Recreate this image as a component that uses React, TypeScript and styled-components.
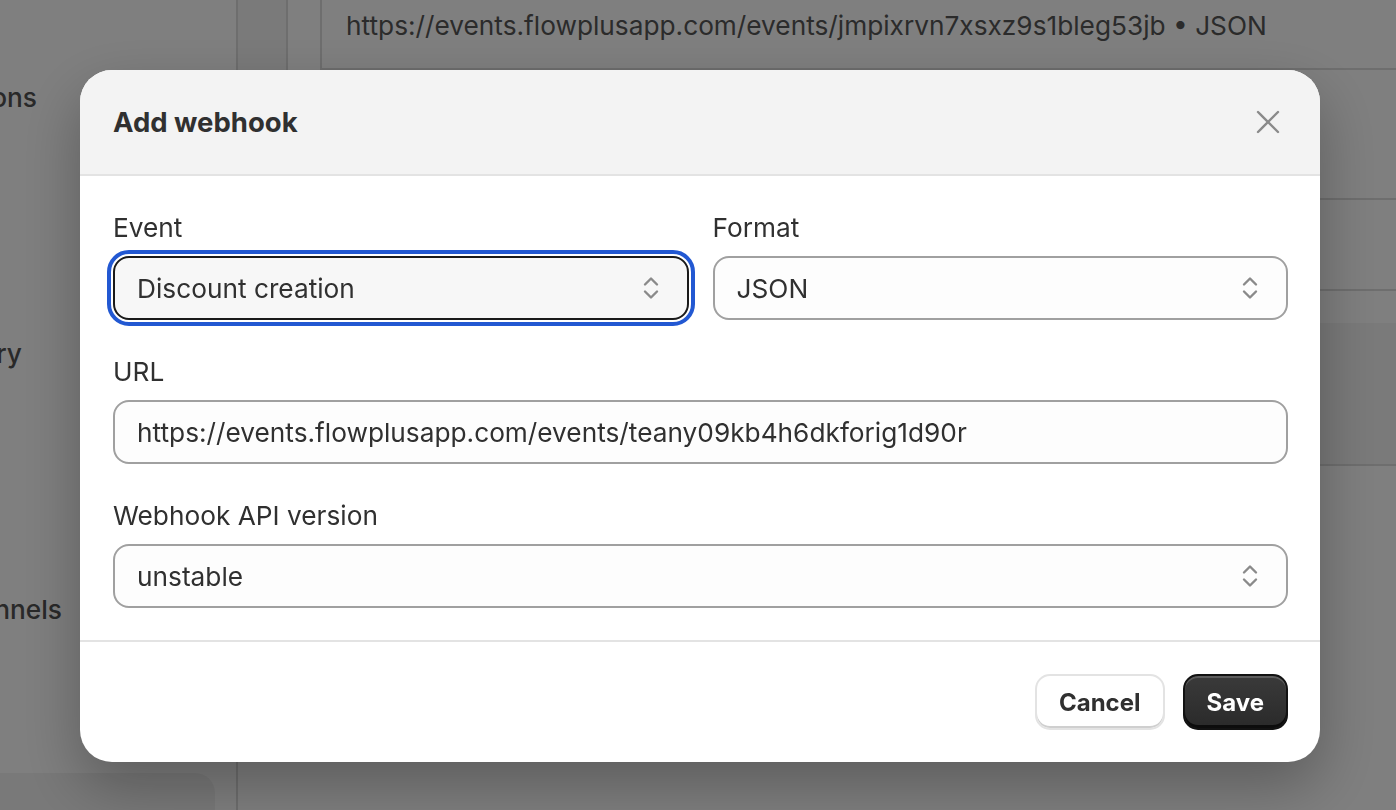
import styled, { createGlobalStyle } from "styled-components";

const GlobalStyle = createGlobalStyle`
  html, body {
    margin: 0;
    padding: 0;
    background: #ffffff;
    font-family: Inter, "Noto Sans", "Liberation Sans", sans-serif;
    -webkit-font-smoothing: antialiased;
  }
  * { box-sizing: border-box; }
`;

const Page = styled.div`
  display: flex;
  width: 1396px;
  height: 810px;
  overflow: hidden;
  background: #ffffff;
  color: #575757;
  font-size: 26.25px;
`;

const Sidebar = styled.nav`
  width: 238px;
  flex-shrink: 0;
  display: flex;
  flex-direction: column;
  overflow: hidden;
  border-right: 2px solid #dcdcdc;
`;

// the settings nav is scrolled sideways, only the ends of long labels show
const NavList = styled.div`
  display: flex;
  flex-direction: column;
  padding-top: 2px;
  margin-left: -250px;
`;

const NavItem = styled.div`
  height: 64px;
  line-height: 64px;
  flex-shrink: 0;
  white-space: nowrap;
  font-weight: 550;
  color: #525252;
`;

const SidebarCard = styled.div`
  margin-top: auto;
  flex-shrink: 0;
  width: 215px;
  height: 37px;
  background: #f2f2f2;
  border-top-right-radius: 20px;
`;

const Main = styled.div`
  flex: 1;
  display: flex;
  align-items: flex-start;
`;

const Rail = styled.div`
  width: 50px;
  height: 700px;
  background: #f4f4f4;
  border-right: 2px solid #dcdcdc;
`;

const Content = styled.div`
  margin-left: 32px;
  flex: 1;
  height: 700px;
  border-left: 2px solid #dcdcdc;
  display: flex;
  flex-direction: column;
`;

const ContentRow = styled.div<{ $h: number; $shade?: boolean }>`
  height: ${(p) => p.$h}px;
  flex-shrink: 0;
  padding-left: 24px;
  border-bottom: 2px solid #dcdcdc;
  background: ${(p) => (p.$shade ? "#f4f4f4" : "transparent")};
`;

const RowText = styled.div`
  line-height: 32px;
  margin-top: 10px;
`;

const Gap = styled.div`
  height: 32px;
  flex-shrink: 0;
`;

const Overlay = styled.div`
  position: fixed;
  inset: 0;
  background: rgba(0, 0, 0, 0.5);
  display: flex;
  justify-content: center;
  align-items: flex-start;
  padding-top: 70px;
  padding-left: 4px;
`;

const Modal = styled.div`
  width: 1240px;
  background: #ffffff;
  border-radius: 32px;
  overflow: hidden;
  box-shadow: 0 24px 60px rgba(0, 0, 0, 0.28);
  color: #303030;
  font-size: 26.25px;
`;

const Header = styled.header`
  height: 106px;
  background: #f3f3f3;
  border-bottom: 2px solid #e3e3e3;
  padding: 0 32px 0 33px;
  display: flex;
  align-items: center;
  justify-content: space-between;
`;

const Title = styled.h2`
  margin: 0;
  font-size: 27.5px;
  font-weight: 650;
  color: #303030;
`;

const CloseButton = styled.button`
  width: 40px;
  height: 40px;
  border: 0;
  padding: 0;
  background: transparent;
  display: flex;
  align-items: center;
  justify-content: center;
`;

const Body = styled.div`
  padding: 36px 32px 32px 33px;
  display: flex;
  flex-direction: column;
  gap: 36px;
`;

const Columns = styled.div`
  display: grid;
  grid-template-columns: 1fr 1fr;
  gap: 24px;
`;

const Field = styled.div`
  display: flex;
  flex-direction: column;
  gap: 12px;
`;

const Label = styled.label`
  line-height: 32px;
  color: #303030;
`;

const Control = styled.div<{ $focused?: boolean }>`
  height: 64px;
  border-radius: 16px;
  border: 2px solid ${(p) => (p.$focused ? "#1a1a1a" : "#a0a0a0")};
  background: ${(p) => (p.$focused ? "#f7f7f7" : "#fdfdfd")};
  outline: ${(p) => (p.$focused ? "4px solid #2258d2" : "none")};
  outline-offset: 2px;
  padding: 0 26px 0 22px;
  display: flex;
  align-items: center;
  justify-content: space-between;
  color: #303030;
`;

const Footer = styled.footer`
  border-top: 2px solid #e3e3e3;
  padding: 32px;
  display: flex;
  justify-content: flex-end;
  gap: 18px;
`;

const Button = styled.button<{ $primary?: boolean }>`
  height: 56px;
  padding: 0 22px;
  border-radius: 15px;
  font-family: inherit;
  font-size: 24px;
  font-weight: 650;
  cursor: pointer;
  color: ${(p) => (p.$primary ? "#ffffff" : "#303030")};
  background: ${(p) =>
    p.$primary ? "linear-gradient(#3a3a3a, #2a2a2a)" : "#ffffff"};
  border: 2px solid ${(p) => (p.$primary ? "#121212" : "#e3e3e3")};
  box-shadow: ${(p) =>
    p.$primary
      ? "inset 0 2px 0 rgba(255,255,255,0.18), inset 0 -3px 0 #0c0c0c"
      : "inset 0 -2px 0 #cfcfcf"};
`;

const Chevrons = () => (
  <svg width="20" height="28" viewBox="0 0 20 28" fill="none">
    <path
      d="M4 10.5 L10 4.5 L16 10.5"
      stroke="#8a8a8a"
      strokeWidth="2.4"
      strokeLinecap="round"
      strokeLinejoin="round"
    />
    <path
      d="M4 17.5 L10 23.5 L16 17.5"
      stroke="#8a8a8a"
      strokeWidth="2.4"
      strokeLinecap="round"
      strokeLinejoin="round"
    />
  </svg>
);

const CloseIcon = () => (
  <svg width="24" height="24" viewBox="0 0 24 24" fill="none">
    <path
      d="M2 2 L22 22 M22 2 L2 22"
      stroke="#8a8a8a"
      strokeWidth="2.4"
      strokeLinecap="round"
    />
  </svg>
);

const navItems = [
  "Billing",
  "Users and permissions",
  "Payments",
  "Checkout",
  "Customer accounts",
  "Shipping and delivery",
  "Taxes and duties",
  "Locations",
  "Markets",
  "Apps and sales channels",
  "Domains",
];

export default function App() {
  return (
    <>
      <GlobalStyle />
      <Page>
        <Sidebar>
          <NavList>
            {navItems.map((item) => (
              <NavItem key={item}>{item}</NavItem>
            ))}
          </NavList>
          <SidebarCard />
        </Sidebar>
        <Main>
          <Rail />
          <Content>
            <ContentRow $h={70}>
              <RowText>
                https://events.flowplusapp.com/events/jmpixrvn7xsxz9s1bleg53jb • JSON
              </RowText>
            </ContentRow>
            <ContentRow $h={130} />
            <ContentRow $h={91} />
            <Gap />
            <ContentRow $h={143} $shade />
          </Content>
        </Main>
      </Page>
      <Overlay>
        <Modal>
          <Header>
            <Title>Add webhook</Title>
            <CloseButton aria-label="Close">
              <CloseIcon />
            </CloseButton>
          </Header>
          <Body>
            <Columns>
              <Field>
                <Label>Event</Label>
                <Control $focused>
                  <span>Discount creation</span>
                  <Chevrons />
                </Control>
              </Field>
              <Field>
                <Label>Format</Label>
                <Control>
                  <span>JSON</span>
                  <Chevrons />
                </Control>
              </Field>
            </Columns>
            <Field>
              <Label>URL</Label>
              <Control>
                <span>https://events.flowplusapp.com/events/teany09kb4h6dkforig1d90r</span>
              </Control>
            </Field>
            <Field>
              <Label>Webhook API version</Label>
              <Control>
                <span>unstable</span>
                <Chevrons />
              </Control>
            </Field>
          </Body>
          <Footer>
            <Button>Cancel</Button>
            <Button $primary>Save</Button>
          </Footer>
        </Modal>
      </Overlay>
    </>
  );
}
